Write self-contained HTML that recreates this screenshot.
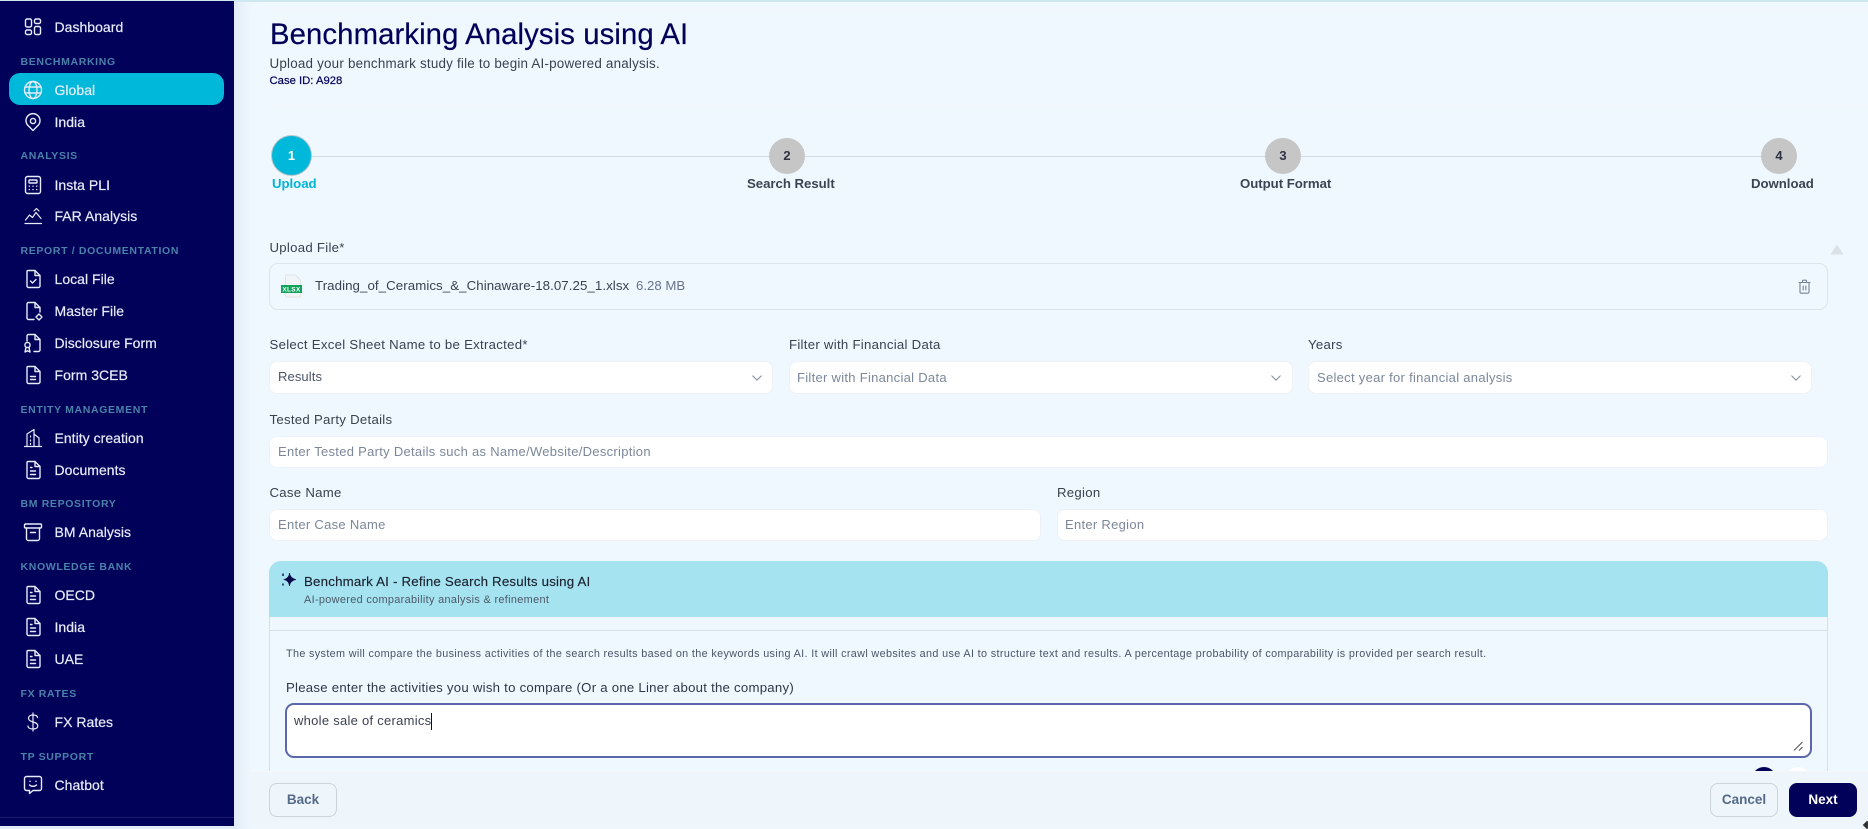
<!DOCTYPE html>
<html><head><meta charset="utf-8"><title>Benchmarking Analysis using AI</title>
<style>
*{box-sizing:border-box}
html,body{margin:0;padding:0;width:1868px;height:826px;overflow:hidden;background:linear-gradient(90deg,#e2ecf8 234px,#eef7fd 250px);font-family:"Liberation Sans",sans-serif}
.a{position:absolute}
.t{position:absolute;white-space:nowrap;line-height:20px;height:20px}
#side{position:absolute;left:0;top:1px;width:234px;height:825px;background:#01015a}
.n{color:#e8ecf8;font-size:14px;left:54.500px;-webkit-text-stroke:.2px #e8ecf8;letter-spacing:.03px}
.s{color:#4a82a8;font-size:10.500px;font-weight:bold;left:20.500px;letter-spacing:.65px;margin-top:.5px}
.i{position:absolute;left:23px;width:20px;height:20px;fill:none;stroke:#e8ecf8;stroke-width:1.400;stroke-linecap:round;stroke-linejoin:round}
#main{position:absolute;left:250px;top:2px;width:1618px;height:824px;background:#eff8fe;border-radius:12px 0 0 0}
.l{color:#3a4150;font-size:13.200px;letter-spacing:.28px;margin-top:1px}
.f{position:absolute;background:#fff;border-radius:8px;border:1px solid #eef2f6}
.p{color:#7c8799;font-size:13px;letter-spacing:.29px;margin-top:.5px}
.c{position:absolute;border-radius:50%;background:#c6c6c6;color:#2d3340;font-size:13px;font-weight:bold;text-align:center;width:36px;height:36px;line-height:36px;top:138px}
.st{color:#3c4352;font-size:13.200px;font-weight:bold;letter-spacing:-.02px;margin-top:1px}
.ch{position:absolute;width:12px;height:12px;fill:none;stroke:#7c8799;stroke-width:1.100;stroke-linecap:round;stroke-linejoin:round}
.b{position:absolute;top:783px;width:68px;height:34px;border-radius:8px;text-align:center;line-height:32px;font-size:13.500px;font-weight:bold;border:1.500px solid #ccd3da;color:#55698a}
</style></head>
<body>
<div class="a" style="left:0;top:0;width:1868px;height:2px;background:#cfe7f0"></div>
<div id="side"></div>

<svg class="i" style="top:17px" viewBox="0 0 20 20"><rect x="2.500" y="2" width="6" height="8" rx="1.500"/><rect x="11.500" y="2" width="6" height="4.500" rx="1.500"/><rect x="2.500" y="13" width="6" height="4.500" rx="1.500"/><rect x="11.500" y="9.500" width="6" height="8" rx="1.500"/></svg>
<div class="t n" style="top:17px">Dashboard</div>
<div class="t s" style="top:51px">BENCHMARKING</div>
<div class="a" style="left:9px;top:73px;width:215px;height:32px;border-radius:11px;background:#00b8d9"></div>
<svg class="i" style="top:80px" viewBox="0 0 20 20"><circle cx="10" cy="10" r="8.500"/><ellipse cx="10" cy="10" rx="4" ry="8.500"/><path d="M2 7h16M2 13h16"/></svg>
<div class="t n" style="top:80px">Global</div>
<svg class="i" style="top:112px" viewBox="0 0 20 20"><path d="M10 18.500l-4.600-4.600a7 7 0 1 1 9.200 0z"/><circle cx="10" cy="9" r="2.600"/></svg>
<div class="t n" style="top:112px">India</div>
<div class="t s" style="top:145px">ANALYSIS</div>
<svg class="i" style="top:175px" viewBox="0 0 20 20"><rect x="2.500" y="1.500" width="15" height="17" rx="2"/><rect x="6" y="5" width="8" height="3" rx=".6"/><path d="M6.300 11.200h.1M10 11.200h.1M13.700 11.200h.1M6.300 14.600h.1M10 14.600h.1M13.700 14.600h.1"/></svg>
<div class="t n" style="top:175px">Insta PLI</div>
<svg class="i" style="top:206px;stroke-width:1.200" viewBox="0 0 20 20"><path d="M2 17.500h16.500M2.500 14l4-5 3 2.500 3.500-5 5 6M11 5l2.500-2.500L16 5"/></svg>
<div class="t n" style="top:206px">FAR Analysis</div>
<div class="t s" style="top:240px">REPORT / DOCUMENTATION</div>
<svg class="i" style="top:269px" viewBox="0 0 20 20"><path d="M5 1.500h7l5 5V17a1.500 1.500 0 0 1-1.500 1.500h-10A1.500 1.500 0 0 1 4 17V2.500A1 1 0 0 1 5 1.500zM12 1.500V6.500h5M7.500 12l2 2 3.500-3.500"/></svg>
<div class="t n" style="top:269px">Local File</div>
<svg class="i" style="top:301px" viewBox="0 0 20 20"><path d="M11 18.500H5.500A1.500 1.500 0 0 1 4 17V3a1.500 1.500 0 0 1 1.500-1.500H12l5 5V11M12 1.500V6.500h5M16 13l3 3-3 3-3-3z"/></svg>
<div class="t n" style="top:301px">Master File</div>
<svg class="i" style="top:333px" viewBox="0 0 20 20"><path d="M4 8V3a1.500 1.500 0 0 1 1.500-1.500H12l5 5V17a1.500 1.500 0 0 1-1.500 1.500H11M12 1.500V6.500h5"/><circle cx="4.500" cy="12" r="2.600"/><path d="M3 14.500l-1 4.500 2.500-1.300L7 19l-1-4.500"/></svg>
<div class="t n" style="top:333px">Disclosure Form</div>
<svg class="i" style="top:365px" viewBox="0 0 20 20"><path d="M5 1.500h7l5 5V17a1.500 1.500 0 0 1-1.500 1.500h-10A1.500 1.500 0 0 1 4 17V2.500A1 1 0 0 1 5 1.500zM12 1.500V6.500h5M7.500 11.500h5M7.500 14.500h5"/></svg>
<div class="t n" style="top:365px">Form 3CEB</div>
<div class="t s" style="top:399px">ENTITY MANAGEMENT</div>
<svg class="i" style="top:428px;stroke-width:1.200" viewBox="0 0 20 20"><path d="M1.500 18.500h17M4 18.500V6l7-4.500v17M11 6l5 4v8.500M7.500 8v1M7.500 12v1M7.500 15.500v1"/></svg>
<div class="t n" style="top:428px">Entity creation</div>
<svg class="i" style="top:460px" viewBox="0 0 20 20"><path d="M5 1.500h7l5 5V17a1.500 1.500 0 0 1-1.500 1.500h-10A1.500 1.500 0 0 1 4 17V2.500A1 1 0 0 1 5 1.500zM12 1.500V6.500h5M7.500 7.500h1.500M7.500 11h5M7.500 14.500h5"/></svg>
<div class="t n" style="top:460px">Documents</div>
<div class="t s" style="top:493px">BM REPOSITORY</div>
<svg class="i" style="top:522px" viewBox="0 0 20 20"><rect x="1.500" y="2" width="17" height="4" rx="1"/><path d="M3.500 6v10.500a2 2 0 0 0 2 2h9a2 2 0 0 0 2-2V6M7.500 10.500h5"/></svg>
<div class="t n" style="top:522px">BM Analysis</div>
<div class="t s" style="top:556px">KNOWLEDGE BANK</div>
<svg class="i" style="top:585px" viewBox="0 0 20 20"><path d="M5 1.500h7l5 5V17a1.500 1.500 0 0 1-1.500 1.500h-10A1.500 1.500 0 0 1 4 17V2.500A1 1 0 0 1 5 1.500zM12 1.500V6.500h5M7.500 7.500h1.500M7.500 11h5M7.500 14.500h5"/></svg>
<div class="t n" style="top:585px">OECD</div>
<svg class="i" style="top:617px" viewBox="0 0 20 20"><path d="M5 1.500h7l5 5V17a1.500 1.500 0 0 1-1.500 1.500h-10A1.500 1.500 0 0 1 4 17V2.500A1 1 0 0 1 5 1.500zM12 1.500V6.500h5M7.500 7.500h1.500M7.500 11h5M7.500 14.500h5"/></svg>
<div class="t n" style="top:617px">India</div>
<svg class="i" style="top:649px" viewBox="0 0 20 20"><path d="M5 1.500h7l5 5V17a1.500 1.500 0 0 1-1.500 1.500h-10A1.500 1.500 0 0 1 4 17V2.500A1 1 0 0 1 5 1.500zM12 1.500V6.500h5M7.500 7.500h1.500M7.500 11h5M7.500 14.500h5"/></svg>
<div class="t n" style="top:649px">UAE</div>
<div class="t s" style="top:683px">FX RATES</div>
<svg class="i" style="top:712px;stroke-width:1.200" viewBox="0 0 20 20"><path d="M10 1v18M14.500 5.500C14.500 3.800 12.500 3 10 3S5.500 4.200 5.500 6.300 7.500 9.300 10 10s4.800 1.500 4.800 3.800S12.700 17 10 17s-5-1-5-3"/></svg>
<div class="t n" style="top:712px">FX Rates</div>
<div class="t s" style="top:746px">TP SUPPORT</div>
<svg class="i" style="top:775px" viewBox="0 0 20 20"><path d="M3.500 1.500h13a2 2 0 0 1 2 2v10a2 2 0 0 1-2 2H10l-3.500 3v-3h-3a2 2 0 0 1-2-2v-10a2 2 0 0 1 2-2zM6.500 10c1.800 1.800 5.200 1.800 7 0M7 6.200v.2M13 6.200v.2"/></svg>
<div class="t n" style="top:775px">Chatbot</div>
<div class="a" style="left:0;top:817px;width:234px;height:1px;background:#1c1c6e"></div>

<div id="main"></div>
<div class="a" style="left:269px;top:10px;width:1599px;height:1px;background:#f5f7f8"></div>
<div class="a" style="left:269px;top:106px;width:1599px;height:1px;background:#f5f7f8"></div>

<div class="t" style="left:270px;top:15px;height:40px;line-height:40px;font-size:29.300px;color:#01015a;letter-spacing:.1px;-webkit-text-stroke:.2px #01015a">Benchmarking Analysis using AI</div>
<div class="t" style="left:269.500px;top:54px;font-size:13.400px;color:#3a4150;letter-spacing:.21px">Upload your benchmark study file to begin AI-powered analysis.</div>
<div class="t" style="left:269.500px;top:71px;font-size:11.300px;color:#01015a;-webkit-text-stroke:.2px #01015a">Case ID: A928</div>

<div class="a" style="left:292px;top:156px;width:1488px;height:1px;background:#d3dbe3"></div>
<div class="c" style="left:272px;top:136px;width:39px;height:39px;line-height:39px;background:#00b8d9;color:#fff;box-shadow:0 0 0 1px #b9c5cc">1</div>
<div class="c" style="left:769px">2</div>
<div class="c" style="left:1265px">3</div>
<div class="c" style="left:1761px">4</div>
<div class="t st" style="left:272px;top:173px;color:#00b4d8">Upload</div>
<div class="t st" style="left:747px;top:173px">Search Result</div>
<div class="t st" style="left:1240px;top:173px">Output Format</div>
<div class="t st" style="left:1751px;top:173px">Download</div>

<div class="t l" style="left:269.500px;top:237px">Upload File*</div>
<div class="a" style="left:269px;top:263px;width:1559px;height:47px;border:1px solid #dde5ea;border-radius:9px"></div>
<svg class="a" style="left:280px;top:274px" width="24" height="24" viewBox="0 0 24 24"><path d="M6.500 1h9l5 5v16a1 1 0 0 1-1 1h-13a1 1 0 0 1-1-1V2a1 1 0 0 1 1-1z" fill="#f1f4f6" stroke="#dfe4e8"/><rect x="1" y="11" width="21" height="8" fill="#10a35a"/><text x="11.500" y="17.500" text-anchor="middle" font-family="Liberation Sans,sans-serif" font-size="6.500" font-weight="bold" fill="#fff" letter-spacing=".3">XLSX</text></svg>
<div class="t" style="left:315px;top:276px;font-size:13.300px;color:#3a4150;letter-spacing:.06px">Trading_of_Ceramics_&amp;_Chinaware-18.07.25_1.xlsx</div>
<div class="t" style="left:636px;top:276px;font-size:13.200px;color:#66728a">6.28 MB</div>
<svg class="a" style="left:1797px;top:279px;fill:none;stroke:#75849a;stroke-width:1.100;stroke-linecap:round;stroke-linejoin:round" width="15" height="15" viewBox="0 0 15 15"><path d="M2 3.500h11M5.500 3.500V2a.8.8 0 0 1 .8-.8h2.400a.8.8 0 0 1 .8.800v1.500M3 3.500v9.500a1.200 1.200 0 0 0 1.200 1.200h6.600A1.200 1.200 0 0 0 12 13V3.500M6.200 7v4M8.800 7v4"/></svg>
<svg class="a" style="left:1830px;top:244px" width="14" height="11" viewBox="0 0 14 11"><path d="M7 .5L13.500 10.500H.5z" fill="#dbe2e6"/></svg>

<div class="t l" style="left:269.500px;top:334px">Select Excel Sheet Name to be Extracted*</div>
<div class="t l" style="left:789px;top:334px">Filter with Financial Data</div>
<div class="t l" style="left:1308px;top:334px">Years</div>
<div class="f" style="left:269px;top:361px;width:504px;height:33px"></div>
<div class="f" style="left:789px;top:361px;width:504px;height:33px"></div>
<div class="f" style="left:1308px;top:361px;width:504px;height:33px"></div>
<div class="t" style="left:278px;top:367px;font-size:13px;color:#4a5568;letter-spacing:.1px">Results</div>
<div class="t p" style="left:797px;top:367px">Filter with Financial Data</div>
<div class="t p" style="left:1317px;top:367px">Select year for financial analysis</div>
<svg class="ch" style="left:751px;top:372px" viewBox="0 0 14 14"><path d="M2 4.500l5 5 5-5"/></svg>
<svg class="ch" style="left:1270px;top:372px" viewBox="0 0 14 14"><path d="M2 4.500l5 5 5-5"/></svg>
<svg class="ch" style="left:1790px;top:372px" viewBox="0 0 14 14"><path d="M2 4.500l5 5 5-5"/></svg>

<div class="t l" style="left:269.500px;top:409px">Tested Party Details</div>
<div class="f" style="left:269px;top:436px;width:1559px;height:32px"></div>
<div class="t p" style="left:278px;top:441px">Enter Tested Party Details such as Name/Website/Description</div>

<div class="t l" style="left:269.500px;top:482px">Case Name</div>
<div class="t l" style="left:1057px;top:482px">Region</div>
<div class="f" style="left:269px;top:509px;width:772px;height:32px"></div>
<div class="f" style="left:1057px;top:509px;width:771px;height:32px"></div>
<div class="t p" style="left:278px;top:514px">Enter Case Name</div>
<div class="t p" style="left:1065px;top:514px">Enter Region</div>

<div class="a" style="left:269px;top:561px;width:1559px;height:215px;border:1px solid #cfe3ee;border-radius:12px 12px 0 0"></div>
<div class="a" style="left:269px;top:561px;width:1559px;height:56px;background:#a5e3f1;border-radius:12px 12px 0 0"></div>
<div class="a" style="left:270px;top:630px;width:1557px;height:1px;background:#cfe3ee"></div>
<svg class="a" style="left:281px;top:572px" width="15" height="15" viewBox="0 0 15 15"><path d="M8.500 1Q9 6.200 15 7.500 9 8.800 8.500 14 8 8.800 3 7.500 8 6.200 8.500 1z" fill="#0a0a4a" stroke="#0a0a4a" stroke-width=".6"/><path d="M2 1.500v2.500M2 11.500v2" stroke="#0a0a4a" stroke-width="1.400"/></svg>
<div class="t" style="left:304px;top:571.500px;font-size:13.300px;color:#1c2230;letter-spacing:.19px;-webkit-text-stroke:.15px #1c2230">Benchmark AI - Refine Search Results using AI</div>
<div class="t" style="left:304px;top:589.500px;font-size:10.900px;color:#4d5865;letter-spacing:.33px">AI-powered comparability analysis &amp; refinement</div>
<div class="t" style="left:286px;top:643.500px;font-size:10.800px;color:#4a5568;letter-spacing:.36px">The system will compare the business activities of the search results based on the keywords using AI. It will crawl websites and use AI to structure text and results. A percentage probability of comparability is provided per search result.</div>
<div class="t" style="left:286px;top:678px;font-size:13.200px;color:#2f3745;letter-spacing:.25px">Please enter the activities you wish to compare (Or a one Liner about the company)</div>
<div class="a" style="left:285px;top:703px;width:1527px;height:55px;background:#fff;border:2px solid #5a68ab;border-radius:9px"></div>
<div class="t" style="left:294px;top:711px;font-size:13px;color:#3a4150;letter-spacing:.27px">whole sale of ceramics</div>
<div class="a" style="left:431px;top:713px;width:1px;height:17px;background:#111"></div>
<svg class="a" style="left:1792px;top:739px" width="13" height="13" viewBox="0 0 13 13"><path d="M2 11.500L10.500 3M7 11.500l3.500-3.500" stroke="#555" stroke-width="1.100" fill="none"/></svg>
<div class="a" style="left:1752px;top:767px;width:24px;height:24px;border-radius:50%;background:#01015a"></div>
<div class="a" style="left:1786px;top:767px;width:24px;height:24px;border-radius:50%;background:#fff"></div>

<div class="a" style="left:250px;top:771px;width:1618px;height:55px;background:#eef6fc;border-top:1px solid #f4f8fb"></div>
<div class="b" style="left:269px">Back</div>
<div class="b" style="left:1710px">Cancel</div>
<div class="b" style="left:1789px;background:#01015a;border-color:#01015a;color:#fff">Next</div>
<div class="a" style="left:1864px;top:822px;width:6px;height:6px;background:#333;transform:rotate(45deg)"></div>
</body></html>
